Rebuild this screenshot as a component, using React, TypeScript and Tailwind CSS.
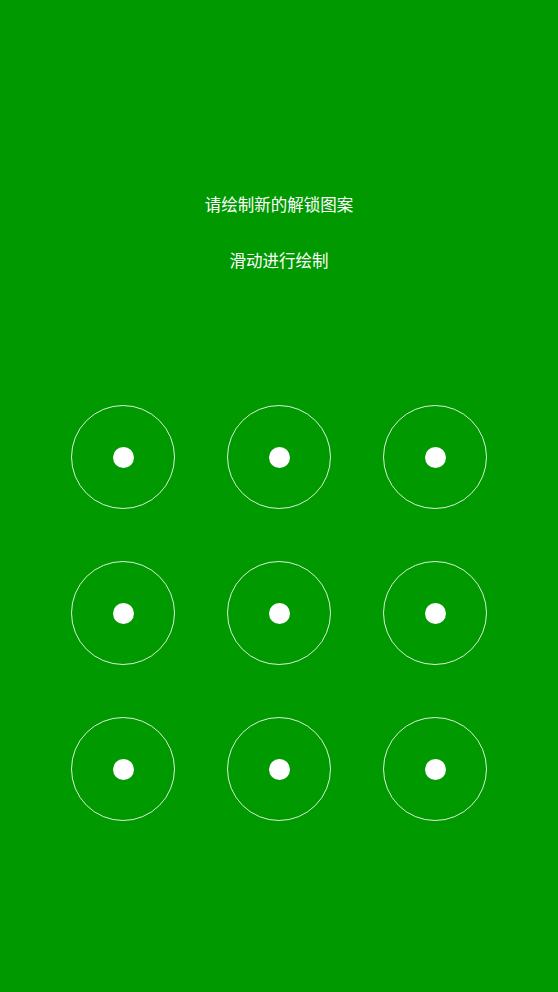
export default function App() {
  const dots = Array.from({ length: 9 }, (_, i) => i);

  return (
    <div
      className="flex h-[992px] w-full flex-col items-center bg-[#009900] text-white"
      style={{ fontFamily: '"Noto Sans CJK SC", "Noto Sans", sans-serif' }}
    >
      <div className="mt-[192px] text-[16.5px] leading-6">请绘制新的解锁图案</div>
      <div className="mt-[32px] text-[16.5px] leading-6">滑动进行绘制</div>

      <div className="mt-[107px] grid w-[468px] grid-cols-3">
        {dots.map((i) => (
          <div key={i} className="flex h-[156px] items-center justify-center">
            <div className="flex h-[104px] w-[104px] items-center justify-center rounded-full border border-white/85">
              <div className="h-[21px] w-[21px] rounded-full bg-white" />
            </div>
          </div>
        ))}
      </div>
    </div>
  );
}
